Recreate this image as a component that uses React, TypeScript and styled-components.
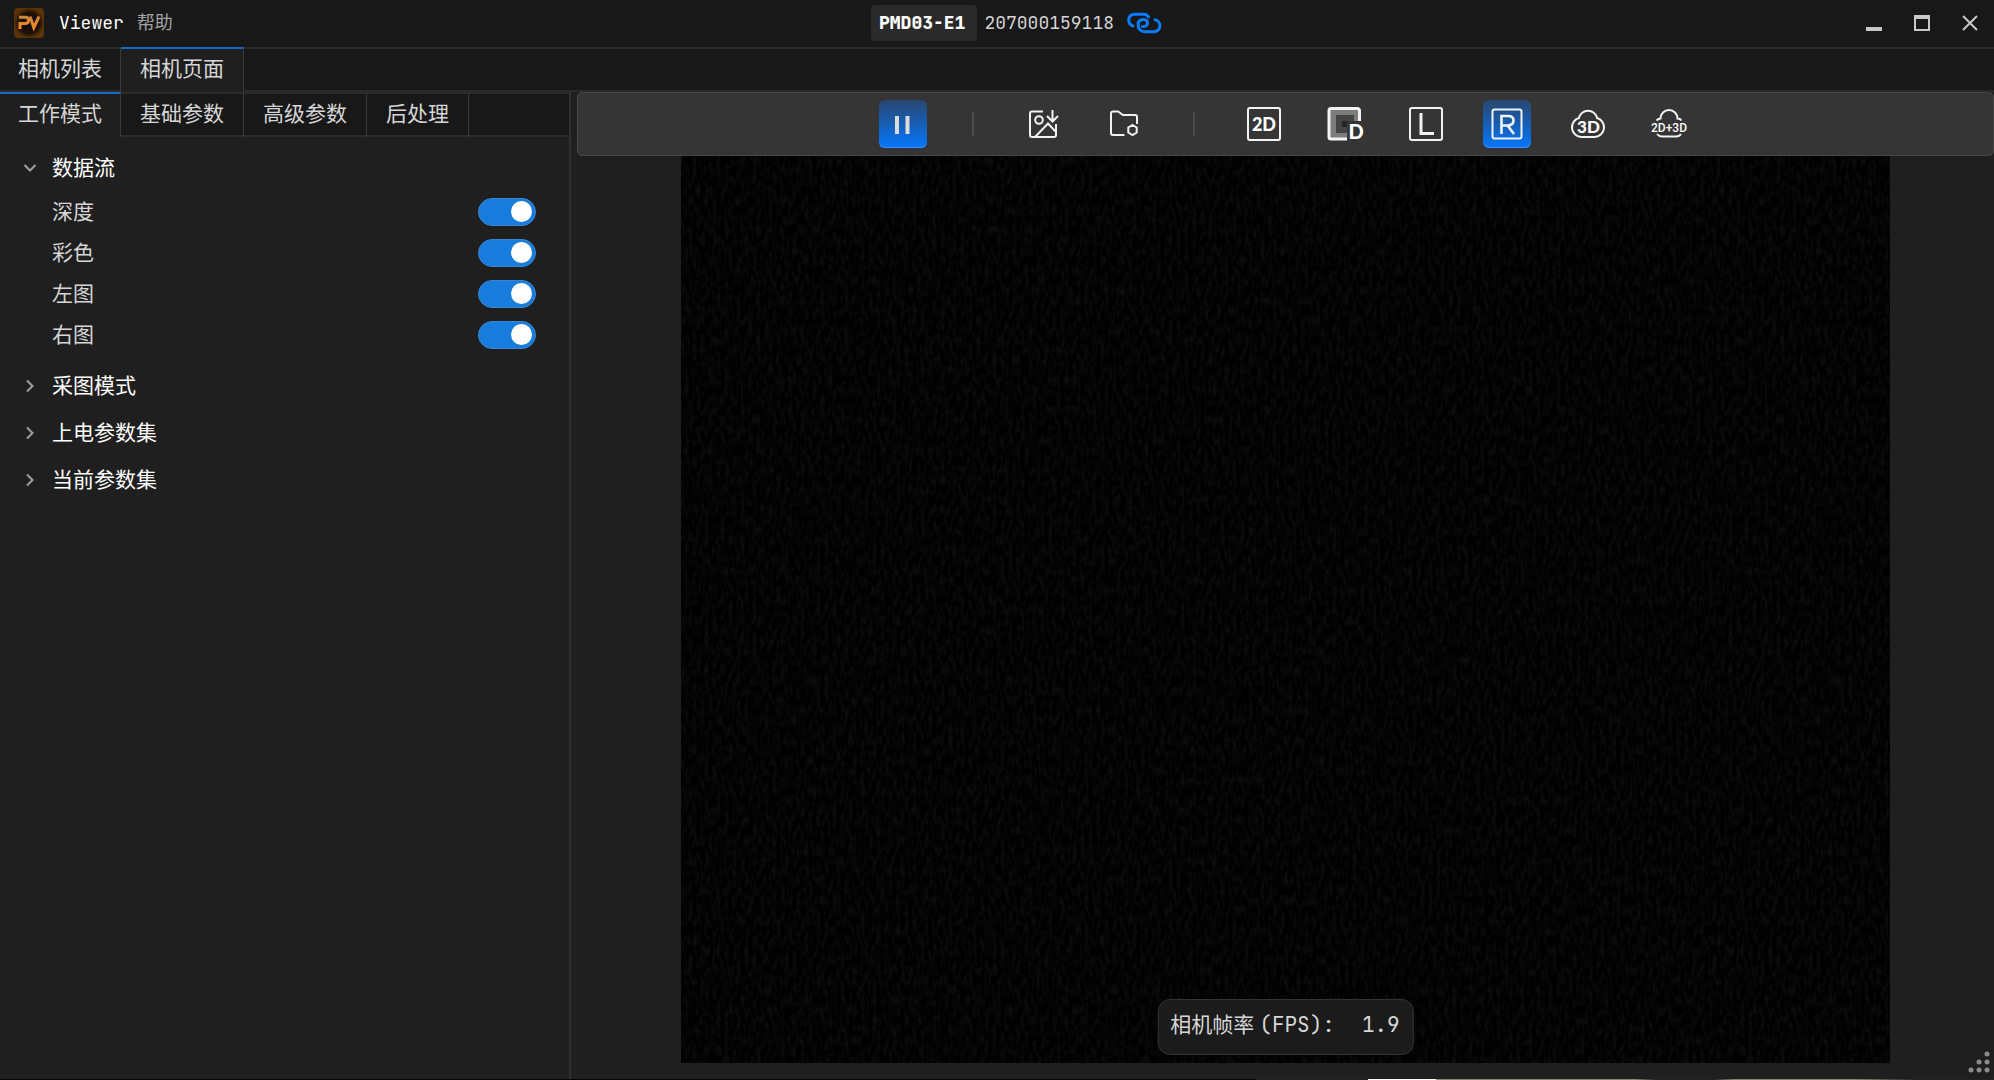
import React, { useState } from 'react';
import styled, { createGlobalStyle, css } from 'styled-components';

const fontStack = `'JetBrains Mono', 'DejaVu Sans Mono', 'Noto Sans CJK SC', monospace`;

const GlobalStyle = createGlobalStyle`
  * { box-sizing: border-box; }
  body {
    margin: 0;
    background: #1f1f1f;
    color: #d6d6d6;
    font-family: ${fontStack};
    font-size: 21px;
  }
  button { font: inherit; color: inherit; background: none; border: 0; padding: 0; cursor: pointer; }
  h1, h2, p { margin: 0; font: inherit; }
`;

const Window = styled.div`
  display: flex;
  flex-direction: column;
  height: 100vh;
  min-height: 600px;
  overflow: hidden;
  background: #1f1f1f;
`;

const TitleBar = styled.header`
  display: flex;
  align-items: center;
  flex: none;
  height: 47px;
  padding-bottom: 1px;
  background: #181818;
  font-size: 18px;
  line-height: 36px;
`;

const TitleLeft = styled.div`
  display: flex;
  align-items: center;
  width: 183px;
  padding-left: 14px;
`;

const AppName = styled.h1`
  margin-left: 15px;
  color: #ffffff;
`;

const HelpButton = styled.button`
  margin-left: 13px;
  color: #a3a3a3;
`;

const DeviceInfo = styled.div`
  display: flex;
  flex: 1;
  align-items: center;
  justify-content: center;
`;

const ModelChip = styled.strong`
  padding: 0 12px 0 8px;
  margin-right: 7px;
  border-radius: 4px;
  background: #2a2a2a;
  color: #ffffff;
  font-weight: 800;
`;

const LinkIcon = styled.svg`
  width: 36px;
  height: 22px;
  margin-left: 12px;
`;

const WindowButton = styled.button`
  display: grid;
  place-items: center;
  width: 48px;
  height: 46px;
`;

const TabBar = styled.nav`
  display: flex;
  flex: none;
  height: 45px;
  background: linear-gradient(#2a2a2a, #2a2a2a) bottom / 100% 2px no-repeat, #181818;
  border-top: 2px solid #2a2a2a;
`;

const Tab = styled.button<{ $active?: boolean }>`
  flex: none;
  height: 45px;
  margin-top: -2px;
  padding: 0 19px 7px;
  border-top: 2px solid ${(p) => (p.$active ? '#1668c4' : 'transparent')};
  border-right: 1px solid #3a3a3a;
  &:first-child { padding-left: 18px; padding-right: 18px; }
  ${(p) => p.$active && css`background: #1f1f1f;`}
`;

const Body = styled.div`
  display: flex;
  flex: 1;
  min-height: 0;
`;

const SidePanel = styled.aside`
  flex: none;
  width: 571px;
  border-right: 2px solid #303030;
`;

const Settings = styled.div`
  padding: 7px 33px 0 52px;
`;

const SectionHeader = styled.button`
  display: flex;
  align-items: center;
  width: 100%;
  height: 47px;
  margin-left: -29px;
  color: #ffffff;
`;

const ItemName = styled.span`
  padding-bottom: 4px;
`;

const Chevron = styled.svg<{ $open: boolean }>`
  width: 14px;
  height: 14px;
  margin-right: 15px;
  transform: rotate(${(p) => (p.$open ? 90 : 0)}deg);
`;

const StreamList = styled.div`
  padding-bottom: 7px;
`;

const StreamRow = styled.label`
  display: flex;
  align-items: center;
  justify-content: space-between;
  height: 41px;
`;

const Switch = styled.input`
  appearance: none;
  display: flex;
  align-items: center;
  width: 58px;
  height: 28px;
  margin: 0;
  padding: 0 3px;
  border: 1px solid #3a86d2;
  border-radius: 14px;
  background: #4a4a4a;
  cursor: pointer;
  &::before {
    content: '';
    width: 21px;
    height: 21px;
    border-radius: 50%;
    background: #ffffff;
  }
  &:checked {
    justify-content: flex-end;
    background: #187cdc;
  }
`;

const Workspace = styled.main`
  display: flex;
  flex: 1;
  flex-direction: column;
  min-width: 0;
  padding-left: 6px;
`;

const Toolbar = styled.div`
  display: flex;
  flex: none;
  align-items: center;
  justify-content: center;
  gap: 33px;
  height: 64px;
  border: 1px solid #454545;
  border-radius: 5px;
  background: #353535;
`;

const ToolButton = styled.button<{ $active?: boolean }>`
  display: grid;
  place-items: center;
  width: 48px;
  height: 48px;
  border-radius: 6px;
  ${(p) =>
    p.$active &&
    css`
      background: linear-gradient(#28466e, #0677fb);
      box-shadow: inset 0 -1px 0 #3a8ff5;
    `}
`;

const Divider = styled.span`
  width: 26px;
  height: 24px;
  background: linear-gradient(#4a4a4a, #4a4a4a) center / 2px 100% no-repeat;
`;

const Stage = styled.div`
  position: relative;
  display: flex;
  flex: 1;
  justify-content: center;
  min-height: 0;
  padding-bottom: 16px;
`;

const CameraView = styled.svg`
  height: 100%;
  aspect-ratio: 4 / 3;
  background: #000000;
`;

const FpsBadge = styled.p`
  position: absolute;
  bottom: 24px;
  left: 50%;
  display: flex;
  padding: 0 13px 4px 12px;
  border: 1px solid #333333;
  border-radius: 12px;
  background: rgba(31, 31, 31, 0.88);
  line-height: 50px;
  white-space: nowrap;
  transform: translateX(-50%);
`;

const FpsUnit = styled.span`
  margin: 0 27px 0 5px;
`;

const ResizeGrip = styled.svg`
  position: absolute;
  right: 4px;
  bottom: 6px;
  width: 22px;
  height: 22px;
`;

const BottomEdge = styled.footer`
  flex: none;
  height: 1px;
  background: linear-gradient(
    to right,
    #050505 0 63%,
    #242424 63% 68.6%,
    #ffffff 68.6% 72%,
    #7f8d68 72% 82%,
    #1c2828 83% 86%,
    #7f8d68 87% 93%,
    #1c2828 96%
  );
`;

const Glyph = styled.svg`
  width: 40px;
  height: 40px;
  overflow: visible;
  fill: none;
  stroke: #f2f2f2;
  stroke-width: 2;
  text {
    fill: #ffffff;
    stroke: none;
    font-family: Lato, 'Open Sans', sans-serif;
    text-anchor: middle;
  }
`;

const NarrowLabel = styled.tspan`
  font-family: Roboto, sans-serif;
`;

function Logo() {
  return (
    <svg width="30" height="30" viewBox="0 0 30 30" aria-hidden="true">
      <defs>
        <radialGradient id="logoBg">
          <stop offset="0" stopColor="#120a14" />
          <stop offset="0.7" stopColor="#201006" />
          <stop offset="1" stopColor="#5a3408" />
        </radialGradient>
        <linearGradient id="logoInk" x1="0" y1="0" x2="0" y2="1">
          <stop offset="0" stopColor="#c9873c" />
          <stop offset="1" stopColor="#ff8a1c" />
        </linearGradient>
      </defs>
      <rect width="30" height="30" rx="4" fill="url(#logoBg)" />
      <path d="M5 9.300H11.500Q14.500 9.300 14.500 12.300T11.500 15.500H6V21M16 8.500L19.800 19.500L25 8.500" fill="none" stroke="url(#logoInk)" strokeWidth="3" />
    </svg>
  );
}

const icons: Record<string, React.ReactNode> = {
  pause: (
    <Glyph viewBox="0 0 40 40">
      <path d="M12 12h4v18h-4zM22.500 12h4v18h-4z" fill="#dcdcdc" stroke="none" />
    </Glyph>
  ),
  save: (
    <Glyph viewBox="0 0 40 40">
      <path d="M20 7.500H9Q7 7.500 7 9.500V31Q7 33 9 33H31Q33 33 33 31V20M12 33L25 19.500L33 28M29.500 6V17M24 12L29.500 17.500L35 12" />
      <circle cx="16" cy="16" r="3.800" />
    </Glyph>
  ),
  folder: (
    <Glyph viewBox="0 0 40 40">
      <path d="M20.500 31H9Q7 31 7 29V9.500Q7 7.500 9 7.500H14L19 11H31Q33 11 33 13V20M28.500 21L32.700 23.500V28.500L28.500 31L24.300 28.500V23.500Z" />
    </Glyph>
  ),
  '2d': (
    <Glyph viewBox="0 0 40 40">
      <rect x="4" y="4" width="32" height="32" rx="2" />
      <text x="20" y="27" fontSize="18" fontWeight="900">2D</text>
    </Glyph>
  ),
  depth: (
    <Glyph viewBox="0 0 40 40">
      <path d="M5 5H34V17H22V34H5Z" fill="#7c7c7c" stroke="none" />
      <path d="M11 11H29V17H22V29H11Z" fill="#444444" stroke="none" />
      <path d="M17 17H22V23H17Z" fill="#262626" stroke="none" />
      <path d="M34.500 17V7Q34.500 4.500 32 4.500H6Q4 4.500 4 6.500V33Q4 35 6 35H22" strokeWidth="3" />
      <text x="31" y="35" fontSize="20" fontWeight="900">D</text>
    </Glyph>
  ),
  left: (
    <Glyph viewBox="0 0 40 40">
      <rect x="4" y="4" width="32" height="32" rx="2" />
      <path d="M15 9V29.500H28" strokeWidth="3" />
    </Glyph>
  ),
  right: (
    <Glyph viewBox="0 0 40 40">
      <rect x="5.500" y="5.500" width="29" height="29" rx="2" />
      <path d="M14.500 30V12H21Q26.500 12 26.500 16.500T21 21.500H14.500M20.500 21.500L27 30" strokeWidth="2.600" />
    </Glyph>
  ),
  '3d': (
    <Glyph viewBox="0 0 40 40">
      <path d="M11 14A9.200 9.200 0 0 1 29 14A9.700 9.700 0 0 1 27 33H13A9.700 9.700 0 0 1 11 14Z" />
      <text x="20.500" y="29" fontSize="17" fontWeight="900">3D</text>
    </Glyph>
  ),
  both: (
    <Glyph viewBox="0 0 40 40">
      <path d="M7.500 16.500Q9.500 14.500 11.500 14.500A8.500 8.500 0 0 1 28.500 14.500Q31 14.500 32.500 16.500M8 30Q10 32.500 13 32.500H27Q30.500 32.500 32 30" />
      <text x="20" y="28" fontSize="12" fontWeight="500"><NarrowLabel>2D+3D</NarrowLabel></text>
    </Glyph>
  ),
};

const tools = [
  { id: 'pause', label: '暂停' },
  { id: 'sep1' },
  { id: 'save', label: '保存图像' },
  { id: 'folder', label: '保存目录' },
  { id: 'sep2' },
  { id: '2d', label: '2D' },
  { id: 'depth', label: '深度' },
  { id: 'left', label: '左图' },
  { id: 'right', label: '右图' },
  { id: '3d', label: '3D' },
  { id: 'both', label: '2D+3D' },
];

const pageTabs = ['相机列表', '相机页面'];
const panelTabs = ['工作模式', '基础参数', '高级参数', '后处理'];
const streams = ['深度', '彩色', '左图', '右图'];
const sections = ['数据流', '采图模式', '上电参数集', '当前参数集'];

export default function App() {
  const [page, setPage] = useState(1);
  const [panel, setPanel] = useState(0);
  const [open, setOpen] = useState<string | null>('数据流');
  const [view, setView] = useState('right');
  const [running, setRunning] = useState(true);

  return (
    <Window>
      <GlobalStyle />
      <TitleBar>
        <TitleLeft>
          <Logo />
          <AppName>Viewer</AppName>
          <HelpButton>帮助</HelpButton>
        </TitleLeft>
        <DeviceInfo>
          <ModelChip>PMD03-E1</ModelChip>
          <span>207000159118</span>
          <LinkIcon viewBox="0 0 36 22" fill="none" stroke="#0a7cff" strokeWidth="3" strokeLinecap="round" aria-hidden="true">
            <path d="M7 14A6 6 0 0 1 8 2.300H17.500Q21 2.300 22.500 5" />
            <path d="M12 11A6 6 0 0 1 18 7.500A3.500 3.500 0 0 1 18 14.500H16.500" />
            <path d="M29 7.800A6 6 0 0 1 28 19.700H18.500A6 6 0 0 1 12.500 12" />
          </LinkIcon>
        </DeviceInfo>
        <WindowButton aria-label="最小化">
          <svg width="16" height="16"><path d="M0 12h16v4H0z" fill="#c8c8c8" /></svg>
        </WindowButton>
        <WindowButton aria-label="最大化">
          <svg width="16" height="16"><path d="M0 0h16v16H0zM2 4v10h12V4z" fill="#c8c8c8" fillRule="evenodd" /></svg>
        </WindowButton>
        <WindowButton aria-label="关闭">
          <svg width="16" height="16"><path d="M1 1L15 15M15 1L1 15" stroke="#c8c8c8" strokeWidth="2" /></svg>
        </WindowButton>
      </TitleBar>

      <TabBar>
        {pageTabs.map((name, i) => (
          <Tab key={name} $active={i === page} onClick={() => setPage(i)}>{name}</Tab>
        ))}
      </TabBar>

      <Body>
        <SidePanel>
          <TabBar>
            {panelTabs.map((name, i) => (
              <Tab key={name} $active={i === panel} onClick={() => setPanel(i)}>{name}</Tab>
            ))}
          </TabBar>
          <Settings>
            {sections.map((name) => (
              <section key={name}>
                <SectionHeader aria-expanded={open === name} onClick={() => setOpen(open === name ? null : name)}>
                  <Chevron viewBox="0 0 14 14" $open={open === name} fill="none" stroke="#a0a0a0" strokeWidth="2">
                    <path d="M4 1.500L9.500 7L4 12.500" />
                  </Chevron>
                  <ItemName>{name}</ItemName>
                </SectionHeader>
                {name === '数据流' && open === name && (
                  <StreamList>
                    {streams.map((stream) => (
                      <StreamRow key={stream}>
                        <ItemName>{stream}</ItemName>
                        <Switch type="checkbox" role="switch" defaultChecked />
                      </StreamRow>
                    ))}
                  </StreamList>
                )}
              </section>
            ))}
          </Settings>
        </SidePanel>

        <Workspace>
          <Toolbar role="toolbar">
            {tools.map(({ id, label }) =>
              label ? (
                <ToolButton
                  key={id}
                  aria-label={label}
                  $active={id === 'pause' ? running : id === view}
                  onClick={() => {
                    if (id === 'pause') setRunning(!running);
                    else if (id !== 'save' && id !== 'folder') setView(id);
                  }}
                >
                  {icons[id]}
                </ToolButton>
              ) : (
                <Divider key={id} />
              ),
            )}
          </Toolbar>
          <Stage>
            <CameraView role="img" aria-label="右图">
              <filter id="sensorNoise" x="0" y="0" width="100%" height="100%" colorInterpolationFilters="sRGB">
                <feTurbulence type="fractalNoise" baseFrequency="0.25 0.1" numOctaves="2" seed="4" />
                <feColorMatrix values="0.11 0 0 0 -0.04  0.11 0 0 0 -0.04  0.11 0 0 0 -0.04  0 0 0 0 1" />
              </filter>
              <rect width="100%" height="100%" filter="url(#sensorNoise)" />
            </CameraView>
            <FpsBadge>
              <span>相机帧率</span>
              <FpsUnit>(FPS):</FpsUnit>
              <span>1.9</span>
            </FpsBadge>
            <ResizeGrip viewBox="0 0 22 22" fill="#8a8a8a" aria-hidden="true">
              <circle cx="19" cy="3" r="2.500" />
              <circle cx="11" cy="11" r="2.500" />
              <circle cx="19" cy="11" r="2.500" />
              <circle cx="3" cy="19" r="2.500" />
              <circle cx="11" cy="19" r="2.500" />
              <circle cx="19" cy="19" r="2.500" />
            </ResizeGrip>
          </Stage>
        </Workspace>
      </Body>
      <BottomEdge />
    </Window>
  );
}
